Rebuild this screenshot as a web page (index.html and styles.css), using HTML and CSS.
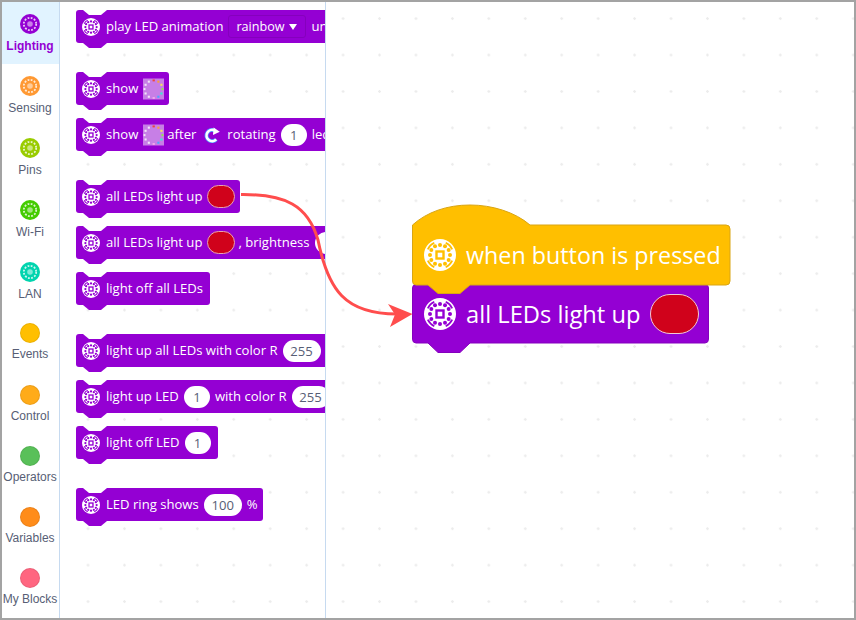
FILE: index.html
```html
<!DOCTYPE html>
<html lang="en">
<head>
    <meta charset="UTF-8">
    <title>Lighting blocks</title>
    <link rel="stylesheet" href="styles.css">
</head>
<body>
    <svg class="defs" width="0" height="0">
        <symbol id="led" viewBox="0 0 32 32">
            <circle cx="16" cy="16" r="16" fill="#fff"/>
            <g fill="currentColor">
                <circle cx="16" cy="6" r="2"/><circle cx="21" cy="7.34" r="2"/><circle cx="24.66" cy="11" r="2"/>
                <circle cx="26" cy="16" r="2"/><circle cx="24.66" cy="21" r="2"/><circle cx="21" cy="24.66" r="2"/>
                <circle cx="16" cy="26" r="2"/><circle cx="11" cy="24.66" r="2"/><circle cx="7.34" cy="21" r="2"/>
                <circle cx="6" cy="16" r="2"/><circle cx="7.34" cy="11" r="2"/><circle cx="11" cy="7.34" r="2"/>
            </g>
            <rect x="12.500" y="12.500" width="7" height="7" fill="none" stroke="currentColor" stroke-width="2.400"/>
            <path d="M21.7 3.8A13.5 13.5 0 0 1 28.2 10.3M28.2 21.7A13.5 13.5 0 0 1 21.7 28.2M10.3 28.2A13.5 13.5 0 0 1 3.8 21.7M3.8 10.3A13.5 13.5 0 0 1 10.3 3.8" fill="none" stroke="currentColor" stroke-width="1.800"/>
        </symbol>
        <symbol id="cat" viewBox="0 0 20 20">
            <circle cx="10" cy="10" r="10" fill="currentColor"/>
            <circle cx="10" cy="10" r="2.800" fill="#fff" opacity=".5"/>
            <circle cx="10" cy="10" r="6.200" fill="none" stroke="#fff" stroke-width="1.800" stroke-dasharray="1.800 1.447" opacity=".8"/>
        </symbol>
        <symbol id="matrix" viewBox="0 0 22 22">
            <rect width="22" height="22" fill="#c77fe6"/>
            <rect x="10" y="1" width="2.400" height="2" fill="#f0443a"/>
            <rect x="15" y="2.200" width="2.200" height="2.200" fill="#f9a03a"/>
            <rect x="18.200" y="5.500" width="2.200" height="2.200" fill="#f7e05a"/>
            <rect x="19.400" y="10" width="2" height="2.200" fill="#8fe84a"/>
            <rect x="18.200" y="14.600" width="2.200" height="2.200" fill="#36e8d8"/>
            <rect x="15" y="18" width="2.200" height="2.200" fill="#4aa8ff"/>
            <rect x="10" y="19.400" width="2.400" height="2" fill="#f3a8e8"/>
            <g fill="#f3e4fa">
                <rect x="5" y="18" width="2.200" height="2.200"/><rect x="1.600" y="14.600" width="2.200" height="2.200"/>
                <rect x="0.600" y="10" width="2" height="2.200"/><rect x="1.600" y="5.500" width="2.200" height="2.200"/><rect x="5" y="2.200" width="2.200" height="2.200"/>
            </g>
        </symbol>
    </svg>

    <div class="app">
        <nav class="sidebar">
            <div class="cat active"><svg class="cat-icon purple"><use href="#cat"/></svg><span>Lighting</span></div>
            <div class="cat"><svg class="cat-icon orange"><use href="#cat"/></svg><span>Sensing</span></div>
            <div class="cat"><svg class="cat-icon lime"><use href="#cat"/></svg><span>Pins</span></div>
            <div class="cat"><svg class="cat-icon green"><use href="#cat"/></svg><span>Wi-Fi</span></div>
            <div class="cat"><svg class="cat-icon teal"><use href="#cat"/></svg><span>LAN</span></div>
            <div class="cat"><i class="dot events"></i><span>Events</span></div>
            <div class="cat"><i class="dot control"></i><span>Control</span></div>
            <div class="cat"><i class="dot operators"></i><span>Operators</span></div>
            <div class="cat"><i class="dot variables"></i><span>Variables</span></div>
            <div class="cat"><i class="dot myblocks"></i><span>My Blocks</span></div>
        </nav>

        <main class="main">
            <section class="palette">
                <div class="block"><svg class="led"><use href="#led"/></svg><span>play LED animation</span><span class="drop">rainbow<b></b></span><span>until done</span></div>

                <div class="block gap"><svg class="led"><use href="#led"/></svg><span>show</span><svg class="matrix"><use href="#matrix"/></svg></div>
                <div class="block"><svg class="led"><use href="#led"/></svg><span>show</span><svg class="matrix"><use href="#matrix"/></svg><span>after</span>
                    <svg class="rotate" viewBox="0 0 16 16"><path d="M12.200 12.400A5.600 5.600 0 1 1 10.400 3.400" fill="none" stroke="#4c97ff" stroke-width="4"/><path d="M12.200 12.400A5.600 5.600 0 1 1 10.400 3.400" fill="none" stroke="#fff" stroke-width="2.600"/><path d="M9.600 .4 15.800 4.800 9 8Z" fill="#fff"/></svg>
                    <span>rotating</span><span class="pill num">1</span><span>leds</span></div>

                <div class="block gap"><svg class="led"><use href="#led"/></svg><span>all LEDs light up</span><span class="swatch"></span></div>
                <div class="block"><svg class="led"><use href="#led"/></svg><span>all LEDs light up</span><span class="swatch"></span><span>, brightness</span><span class="pill wide">50</span></div>
                <div class="block"><svg class="led"><use href="#led"/></svg><span>light off all LEDs</span></div>

                <div class="block gap"><svg class="led"><use href="#led"/></svg><span>light up all LEDs with color R</span><span class="pill wide">255</span></div>
                <div class="block"><svg class="led"><use href="#led"/></svg><span>light up LED</span><span class="pill num">1</span><span>with color R</span><span class="pill wide">255</span></div>
                <div class="block"><svg class="led"><use href="#led"/></svg><span>light off LED</span><span class="pill num">1</span></div>

                <div class="block gap"><svg class="led"><use href="#led"/></svg><span>LED ring shows</span><span class="pill wide">100</span><span class="pct">%</span></div>
            </section>

            <section class="workspace">
                <div class="stack-block">
                    <svg class="shape" width="298" height="70"><path d="M.5 4Q.5 .5 4 .5H293Q296.500 .5 296.500 4V55Q296.500 59 293 59H58L48 68.500H26L16 59H4Q.5 59 .5 55Z" fill="#9400d3" stroke="#8500bd"/></svg>
                    <div class="big-row">
                        <svg class="big-led"><use href="#led"/></svg>
                        <span>all LEDs light up</span>
                        <span class="big-swatch"></span>
                    </div>
                </div>
                <div class="hat-block">
                    <svg class="shape" width="320" height="92"><path d="M.5 21C15 8 35 1 58 1C80 1 103 8 118 21H314Q318 21 318 25V77Q318 81 314 81H58L48 89.500H26L16 81H4Q.5 81 .5 77Z" fill="#ffbf00" stroke="#d9a514"/></svg>
                    <div class="big-row hat-row">
                        <svg class="big-led"><use href="#led"/></svg>
                        <span>when button is pressed</span>
                    </div>
                </div>
            </section>
        </main>

        <svg class="arrow" width="856" height="620">
            <path d="M241 194.500C285 194 308 205 318 240C328 290 345 314 397 314" fill="none" stroke="#ff4d4d" stroke-width="3"/>
            <path d="M412.500 314 388 304 395 314.500 390 327Z" fill="#ff4d4d"/>
        </svg>
    </div>
</body>
</html>
```

FILE: styles.css
```css
* {
    box-sizing: border-box;
}
body {
    margin: 0;
    font-family: "Open Sans", sans-serif;
    background: #fff;
}
.defs {
    position: absolute;
}
.app {
    position: relative;
    display: flex;
    width: 856px;
    height: 620px;
    border: 2px solid #a3a3a3;
    overflow: hidden;
}

/* categories */
.sidebar {
    display: flex;
    flex-direction: column;
    flex: none;
    width: 58px;
    background: #fff;
    border-right: 1px solid #c6daf0;
}
.cat {
    display: flex;
    flex-direction: column;
    align-items: center;
    flex: none;
    gap: 4px;
    height: 61.4px;
    padding: 12px 1px 0 0;
    font-family: "Liberation Sans", sans-serif;
    font-size: 12px;
    line-height: 14px;
    color: #575e75;
    white-space: nowrap;
}
.cat:nth-child(-n+5) {
    gap: 5px;
}
.cat:nth-child(-n+4) {
    height: 62px;
}
.cat:nth-child(n+8) {
    height: 61px;
}
.cat.active {
    background: #e1f3ff;
    color: #9400d3;
    font-weight: bold;
}
.cat-icon {
    flex: none;
    width: 20px;
    height: 20px;
}
.purple { color: #9400d3; }
.orange { color: #ff9933; }
.lime { color: #99cc00; }
.green { color: #44cc00; }
.teal { color: #00d4ae; }
.dot {
    display: block;
    flex: none;
    width: 20px;
    height: 20px;
    border-radius: 50%;
    border: 1px solid rgba(0,0,0,0.08);
}
.events { background: #ffbf00; }
.control { background: #ffab19; }
.operators { background: #59c059; }
.variables { background: #ff8c1a; }
.myblocks { background: #ff6680; }

/* palette and workspace share the dot grid */
.main {
    display: flex;
    flex: 1;
    min-width: 0;
    background-image: radial-gradient(circle at center, #ececec 0, #ececec 1px, transparent 1.5px);
    background-size: 36.45px 36.45px;
    background-position: 9.8px 34.8px;
}
.palette {
    display: flex;
    flex-direction: column;
    align-items: flex-start;
    flex: none;
    width: 266px;
    padding: 8px 0 0 16px;
    border-right: 1px solid #c6daf0;
    overflow: hidden;
}
.block {
    position: relative;
    display: flex;
    align-items: center;
    flex: none;
    gap: 5px;
    height: 33px;
    margin-bottom: 13px;
    padding: 0 7px 0 6px;
    background: #9400d3;
    border-radius: 3px;
    color: #fff;
    font-size: 13.1px;
    white-space: nowrap;
}
.block.gap {
    margin-top: 16px;
}
.block::before {
    content: "";
    position: absolute;
    left: 7px;
    top: 0;
    width: 24px;
    height: 5px;
    background: #fff;
    clip-path: polygon(0 0, 100% 0, 75% 100%, 25% 100%);
}
.block::after {
    content: "";
    position: absolute;
    left: 7px;
    top: 100%;
    width: 24px;
    height: 5px;
    background: #9400d3;
    clip-path: polygon(0 0, 100% 0, 75% 100%, 25% 100%);
}
.block > span {
    margin-bottom: 2px;
}
.led {
    flex: none;
    width: 18px;
    height: 18px;
    margin-right: 1px;
    color: #9400d3;
}
.matrix {
    flex: none;
    width: 21px;
    height: 22px;
    margin-right: -2px;
}
.rotate {
    flex: none;
    width: 16px;
    height: 16px;
    margin: 0 2px 0 3px;
}
.block > .pill {
    display: block;
    flex: none;
    height: 22px;
    line-height: 22px;
    margin-bottom: 0;
    padding: 0 8px;
    background: #fff;
    border-radius: 11px;
    color: #575e75;
    text-align: center;
}
.block > .num {
    width: 26px;
}
.block > .wide {
    width: 38px;
    padding: 0;
}
.block > .swatch {
    flex: none;
    width: 28px;
    height: 23px;
    margin: 0 -2px 0 0;
    background: #d0021b;
    border: 1px solid #e8a3b0;
    border-radius: 11.5px;
}
.block > .drop {
    display: flex;
    align-items: center;
    gap: 4px;
    width: 78px;
    height: 23px;
    margin-bottom: 0;
    padding: 0 7px;
    border: 1px solid #8500bd;
    border-radius: 3px;
    font-size: 12.6px;
}
.drop b {
    display: block;
    width: 0;
    height: 0;
    border: 4.5px solid transparent;
    border-top: 6px solid #fff;
    border-bottom: 0;
}
.block > .pct {
    margin-right: -2px;
}

/* free canvas */
.workspace {
    position: relative;
    flex: 1;
}
.hat-block {
    position: absolute;
    left: 86px;
    top: 202px;
    width: 320px;
    height: 92px;
}
.stack-block {
    position: absolute;
    left: 86px;
    top: 282px;
    width: 298px;
    height: 70px;
}
.shape {
    position: absolute;
    left: 0;
    top: 0;
}
.big-row {
    position: relative;
    display: flex;
    align-items: center;
    gap: 10px;
    height: 59px;
    padding-left: 12px;
    color: #fff;
    font-size: 23.7px;
    white-space: nowrap;
}
.hat-row {
    height: 60px;
    margin-top: 21px;
    font-size: 23.3px;
}
.big-led {
    flex: none;
    width: 32px;
    height: 32px;
    color: #9400d3;
}
.hat-row .big-led {
    color: #ffbf00;
}
.big-swatch {
    flex: none;
    width: 49px;
    height: 40px;
    background: #d0021b;
    border: 1px solid #f3c9d0;
    border-radius: 20px;
}
.arrow {
    position: absolute;
    left: -2px;
    top: -2px;
    pointer-events: none;
}
```
